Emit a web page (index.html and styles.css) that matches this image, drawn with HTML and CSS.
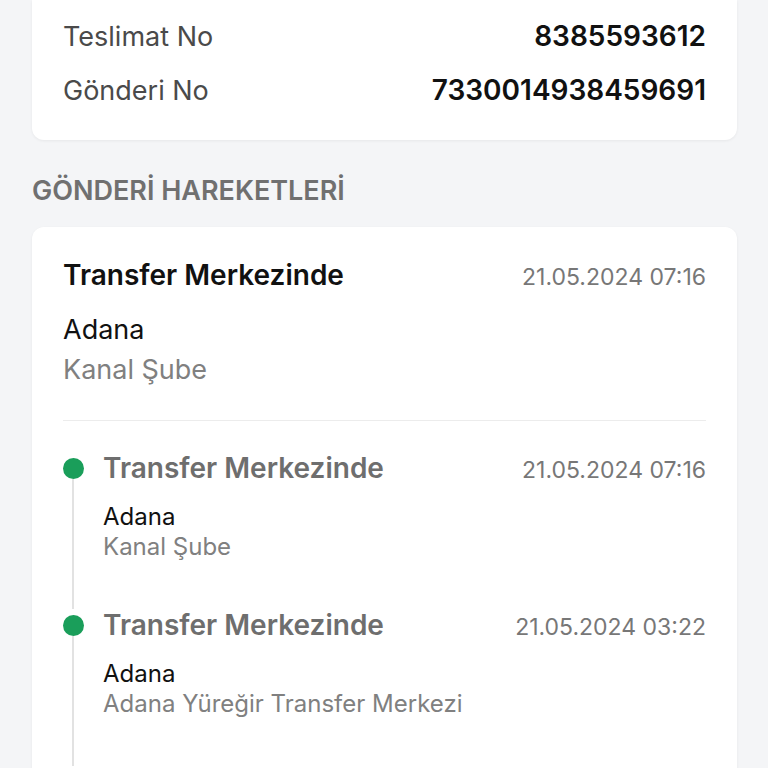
FILE: index.html
```html
<!DOCTYPE html>
<html lang="tr">
<head>
<meta charset="utf-8">
<link rel="stylesheet" href="styles.css">
</head>
<body>
<div class="page">
  <div class="card info-card">
    <div class="info-row"><span class="label">Teslimat No</span><span class="value">8385593612</span></div>
    <div class="info-row"><span class="label">Gönderi No</span><span class="value">7330014938459691</span></div>
  </div>

  <h2 class="section-title">GÖNDERİ HAREKETLERİ</h2>

  <div class="card moves-card">
    <div class="latest">
      <div class="head-row">
        <span class="status">Transfer Merkezinde</span>
        <span class="date">21.05.2024 07:16</span>
      </div>
      <div class="city">Adana</div>
      <div class="branch">Kanal Şube</div>
    </div>
    <div class="divider"></div>
    <div class="timeline">
      <div class="t-item">
        <div class="rail"><span class="dot"></span><span class="line"></span></div>
        <div class="t-body">
          <div class="head-row">
            <span class="t-status">Transfer Merkezinde</span>
            <span class="t-date">21.05.2024 07:16</span>
          </div>
          <div class="t-city">Adana</div>
          <div class="t-branch">Kanal Şube</div>
        </div>
      </div>
      <div class="t-item">
        <div class="rail"><span class="dot"></span><span class="line"></span></div>
        <div class="t-body">
          <div class="head-row">
            <span class="t-status">Transfer Merkezinde</span>
            <span class="t-date">21.05.2024 03:22</span>
          </div>
          <div class="t-city">Adana</div>
          <div class="t-branch">Adana Yüreğir Transfer Merkezi</div>
        </div>
      </div>
    </div>
  </div>
</div>
</body>
</html>
```

FILE: styles.css
```css
* { box-sizing: border-box; }
html, body {
  margin: 0;
  padding: 0;
  background: #f4f5f7;
  font-family: Inter, "Noto Sans", sans-serif;
  color: #111;
}
.page {
  padding: 0 31px 0 32px;
  height: 768px;
  overflow: hidden;
}
.card {
  background: #ffffff;
  border-radius: 12px;
  box-shadow: 0 1px 3px rgba(0, 0, 0, 0.06);
}
.info-card {
  border-radius: 0 0 12px 12px;
  padding: 9px 31px 23px 31px;
}
.info-row {
  display: flex;
  justify-content: space-between;
  align-items: center;
  height: 54px;
}
.label {
  font-size: 27px;
  color: #4a4a4a;
}
.value {
  font-size: 28px;
  font-weight: 600;
  color: #111;
}
.section-title {
  margin: 35px 0 20px 0;
  font-size: 27px;
  line-height: 32px;
  font-weight: 600;
  color: #707070;
}
.moves-card {
  padding: 32px 31px 0 31px;
  height: 600px;
}
.head-row {
  display: flex;
  justify-content: space-between;
  align-items: baseline;
}
.status {
  font-size: 28px;
  line-height: 32px;
  font-weight: 600;
  color: #111;
}
.date, .t-date {
  font-size: 23px;
  line-height: 32px;
  color: #777;
}
.city {
  margin-top: 17px;
  font-size: 27px;
  line-height: 40px;
  color: #111;
}
.branch {
  font-size: 27px;
  line-height: 40px;
  color: #808080;
}
.divider {
  margin-top: 30px;
  height: 1px;
  background: #ececec;
}
.timeline {
  padding-top: 31px;
}
.t-item {
  display: flex;
  gap: 20px;
}
.rail {
  width: 20px;
  flex: none;
  display: flex;
  flex-direction: column;
  align-items: center;
}
.dot {
  width: 21px;
  height: 21px;
  margin-top: 6px;
  border-radius: 50%;
  background: #1a9e5a;
  flex: none;
}
.line {
  width: 2px;
  flex: 1;
  background: #e2e2e2;
}
.t-body {
  flex: 1;
  padding-bottom: 47px;
}
.t-status {
  font-size: 28px;
  line-height: 32px;
  font-weight: 600;
  color: #6e6e6e;
}
.t-city {
  margin-top: 16px;
  font-size: 24px;
  line-height: 30px;
  color: #111;
}
.t-branch {
  font-size: 24px;
  line-height: 30px;
  color: #808080;
}
```
